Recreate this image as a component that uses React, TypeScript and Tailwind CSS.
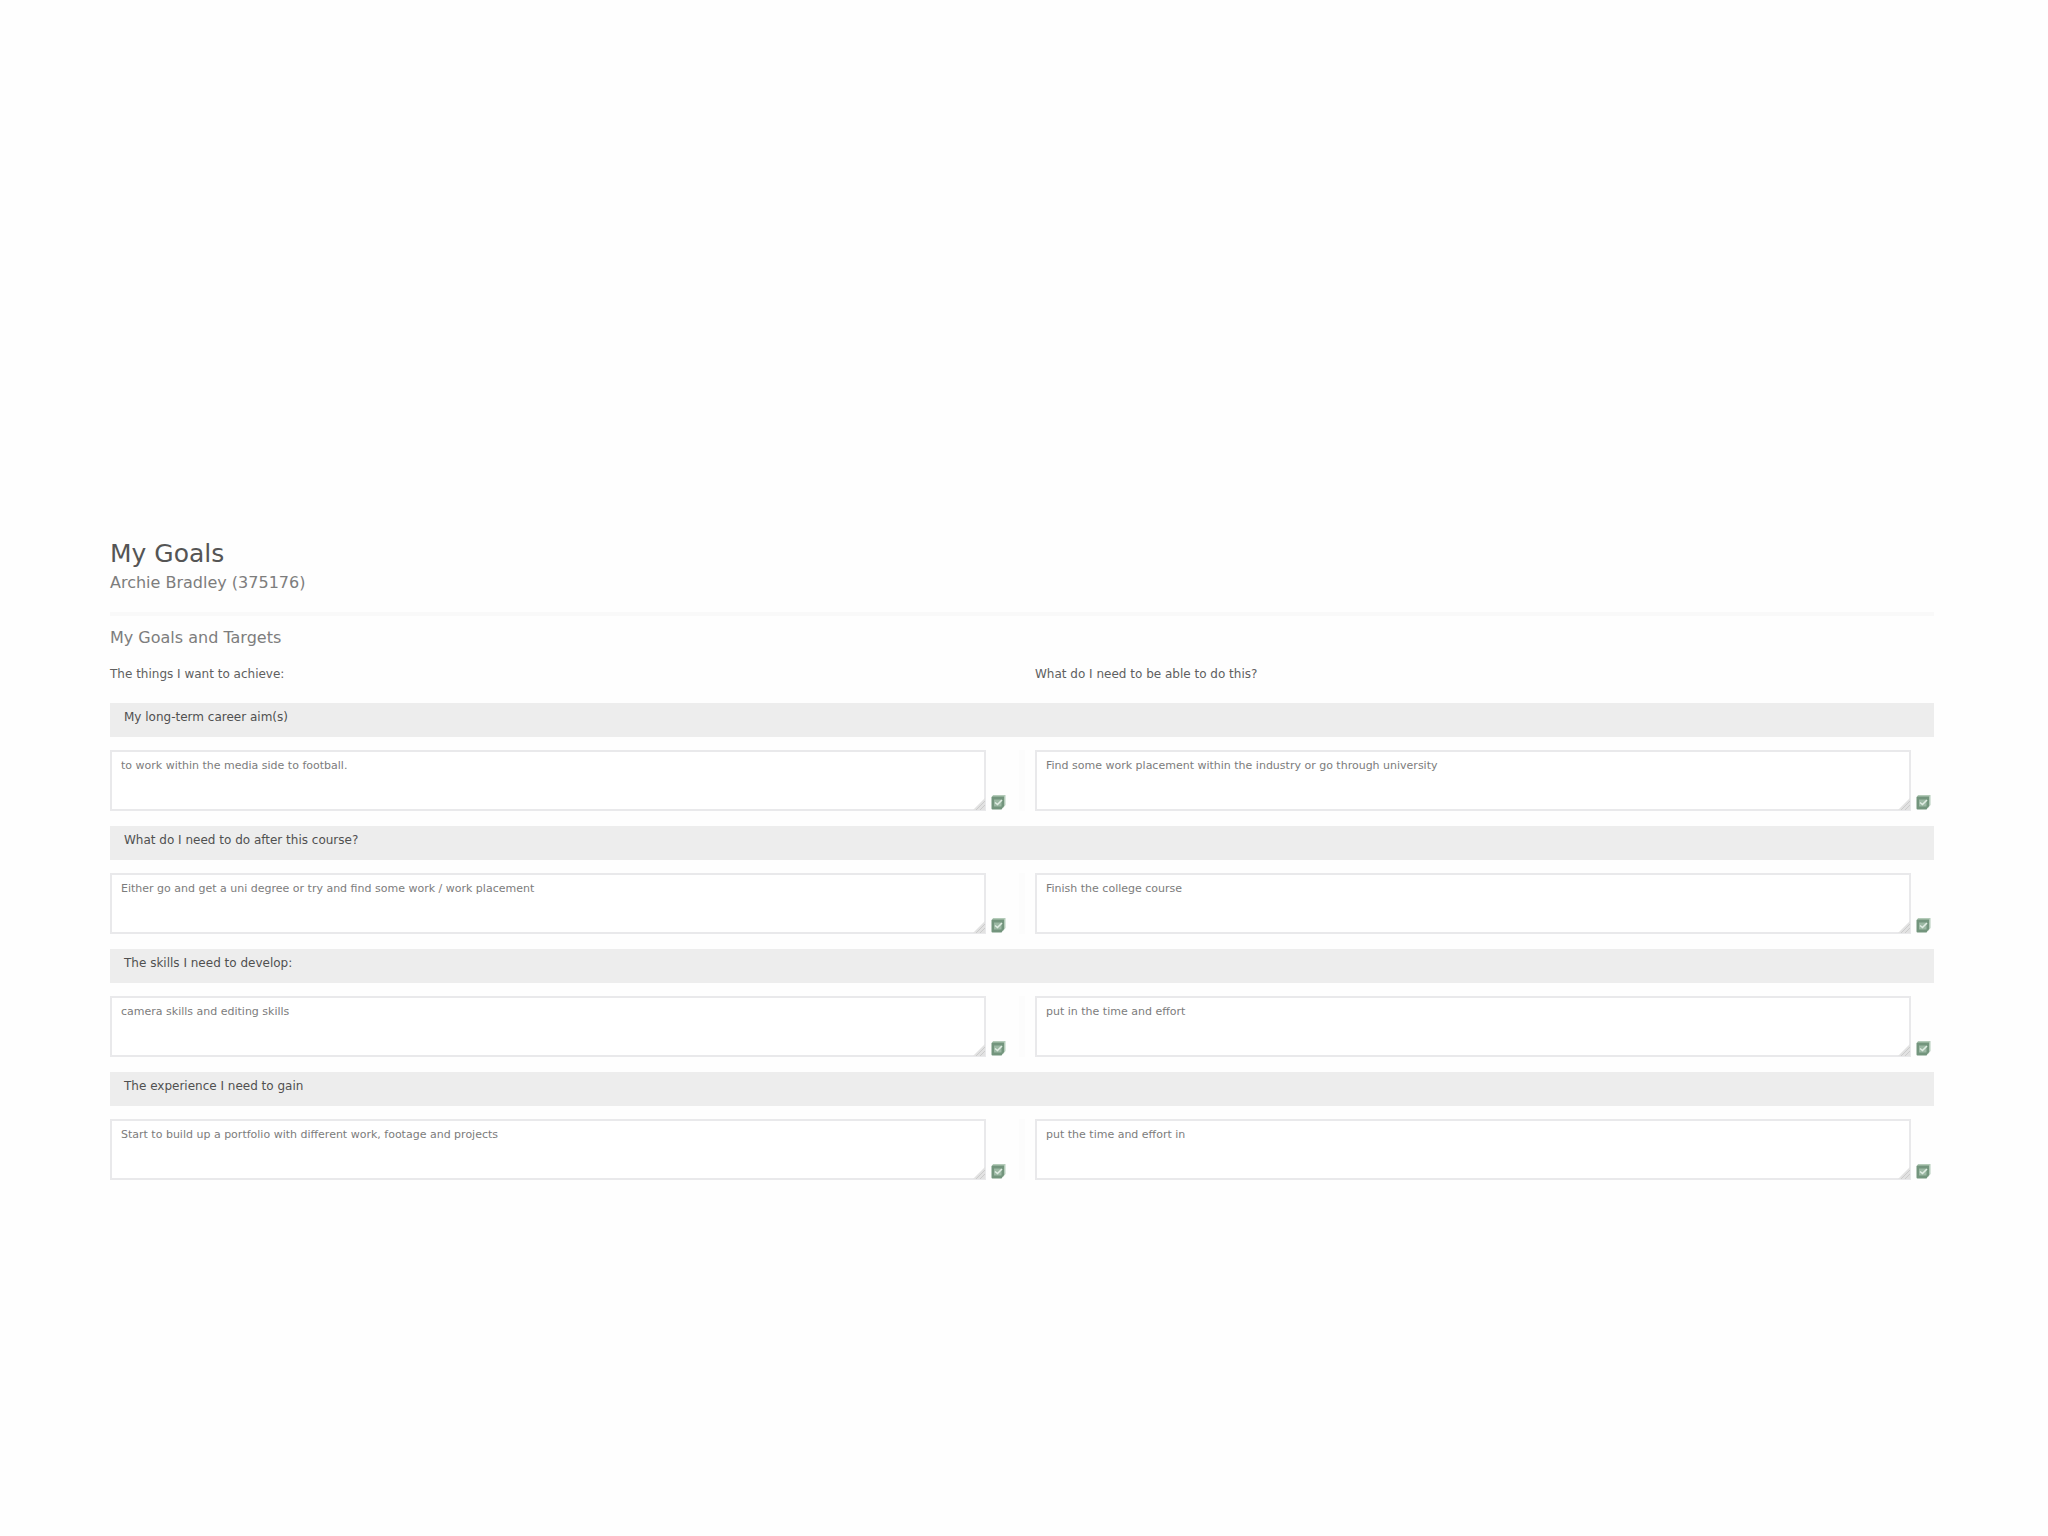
interface Goal {
  id: string
  title: string
  achieve: string
  need: string
}

const goals: Goal[] = [
  {
    id: 'career',
    title: 'My long-term career aim(s)',
    achieve: 'to work within the media side to football.',
    need: 'Find some work placement within the industry or go through university',
  },
  {
    id: 'course',
    title: 'What do I need to do after this course?',
    achieve: 'Either go and get a uni degree or try and find some work / work placement',
    need: 'Finish the college course',
  },
  {
    id: 'skills',
    title: 'The skills I need to develop:',
    achieve: 'camera skills and editing skills',
    need: 'put in the time and effort',
  },
  {
    id: 'experience',
    title: 'The experience I need to gain',
    achieve: 'Start to build up a portfolio with different work, footage and projects',
    need: 'put the time and effort in',
  },
]

function SavedIcon() {
  return (
    <svg viewBox="0 0 15 16" className="w-[15px] h-4" aria-hidden="true">
      <path d="M2 1H14.5V11L12 14V3H1Z" fill="#b4cbb9" />
      <path d="M0.5 3.5Q0.5 2.5 1.5 2.5H13V12L10.5 15.5H1.5Q0.5 15.5 0.5 14.5Z" fill="#73957d" />
      <rect x="3" y="5.5" width="7.5" height="7" fill="#9bb8a3" />
      <path d="M4 8.5L6.5 10.5L11 6" fill="none" stroke="#e0ece3" strokeWidth="1.6" />
    </svg>
  )
}

function GoalField({ labelledBy, value }: { labelledBy: string; value: string }) {
  return (
    <div className="flex flex-1 min-w-0 items-end gap-[5px] pr-[3px]">
      <div className="relative flex-1 h-[61px]">
        <textarea
          aria-labelledby={labelledBy}
          defaultValue={value}
          className="block w-full h-full resize-none border-2 border-[#e9e9eb] bg-white px-[9px] pt-[6px] text-[11px] leading-4 text-[#7c7c7c] outline-none"
        />
        {/* resize grip */}
        <svg
          viewBox="0 0 12 12"
          className="absolute right-px bottom-px size-3 pointer-events-none"
          aria-hidden="true"
        >
          <path d="M12 0V12H0Z" fill="#e2e2e2" />
          <path d="M3 12L12 3M7 12L12 7" stroke="#cccccc" strokeWidth="1" />
        </svg>
      </div>
      <button type="button" aria-label="Save" className="block pb-px">
        <SavedIcon />
      </button>
    </div>
  )
}

export default function App() {
  return (
    <main className="min-h-screen bg-[#fefefe] pt-[538px] pl-[110px] pr-[114px] font-[Verdana,'DejaVu_Sans',sans-serif]">
      <header>
        <h1 className="text-[25px] leading-8 text-[#555555]">My Goals</h1>
        <p className="text-base leading-[26px] text-[#7d7d7d]">Archie Bradley (375176)</p>
      </header>
      <hr className="mt-4 h-1 border-0 bg-[#f9f9f9]" />

      <h2 className="mt-[10px] text-base leading-6 text-[#7d7d7d]">My Goals and Targets</h2>
      <div className="mt-4 mb-[21px] flex gap-[26px] text-xs leading-4 text-[#606060]">
        <p id="col-achieve" className="flex-1">The things I want to achieve:</p>
        <p id="col-need" className="flex-1">What do I need to be able to do this?</p>
      </div>

      <div className="flex flex-col gap-[15px]">
        {goals.map(goal => (
          <section key={goal.id}>
            <h3
              id={goal.id}
              className="h-[34px] bg-[#ededed] pl-[14px] text-xs leading-7 text-[#505050]"
            >
              {goal.title}
            </h3>
            <div className="mt-[13px] flex">
              <GoalField labelledBy={`col-achieve ${goal.id}`} value={goal.achieve} />
              <div className="mx-[10px] w-[6px] bg-[#fcfcfc]" />
              <GoalField labelledBy={`col-need ${goal.id}`} value={goal.need} />
            </div>
          </section>
        ))}
      </div>
    </main>
  )
}
